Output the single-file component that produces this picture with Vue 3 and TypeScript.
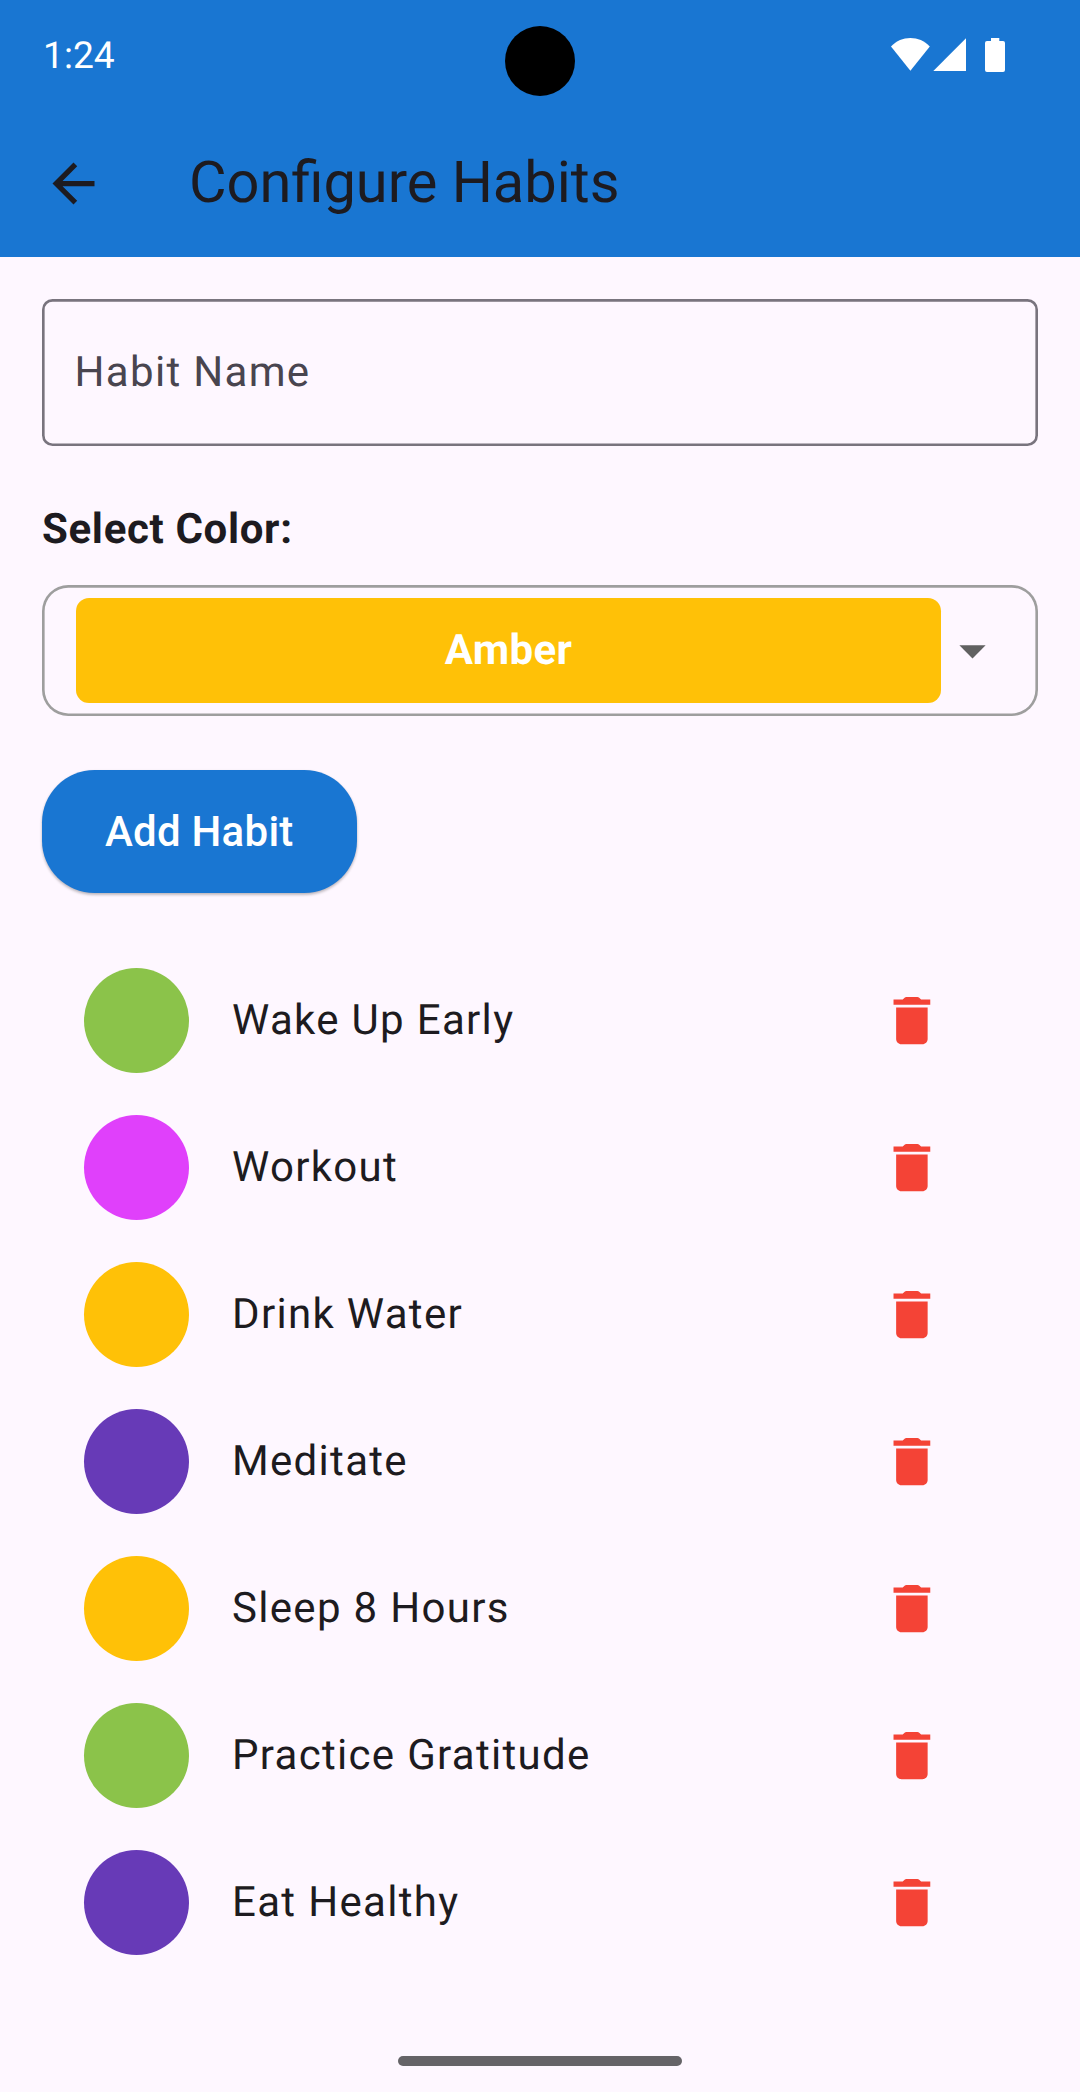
<script setup lang="ts">
interface Habit {
  name: string
  color: string
}

const habits: Habit[] = [
  { name: 'Wake Up Early', color: '#8bc34a' },
  { name: 'Workout', color: '#e040fb' },
  { name: 'Drink Water', color: '#ffc107' },
  { name: 'Meditate', color: '#673ab7' },
  { name: 'Sleep 8 Hours', color: '#ffc107' },
  { name: 'Practice Gratitude', color: '#8bc34a' },
  { name: 'Eat Healthy', color: '#673ab7' },
]
</script>

<template>
  <div class="screen">
    <header class="top">
      <div class="status">
        <span class="time">1:24</span>
        <span class="camera"></span>
        <svg class="status-icons" width="116" height="36" viewBox="0 0 116 36" fill="#fff">
          <path d="M1 9.5C6.500 3.800 13 1 20.400 1S34.300 3.800 39.800 9.500L20.400 33.800Z" />
          <path d="M76 1.200V34H43.300Z" />
          <path d="M101 1h8.300v3h3.700q2 0 2 2v27q0 2-2 2H97q-2 0-2-2V6q0-2 2-2h4Z" />
        </svg>
      </div>
      <div class="appbar">
        <svg class="back" viewBox="0 0 24 24" width="63" height="63" fill="#1d1b20">
          <path d="M20 11H7.830l5.590-5.590L12 4l-8 8 8 8 1.410-1.410L7.830 13H20v-2z" />
        </svg>
        <h1>Configure Habits</h1>
      </div>
    </header>

    <main>
      <div class="field">Habit Name</div>
      <div class="label">Select Color:</div>
      <div class="select">
        <div class="swatch">Amber</div>
        <svg viewBox="0 0 24 24" width="63" height="63" fill="#616161"><path d="M7 10l5 5 5-5z" /></svg>
      </div>
      <button class="add" type="button">Add Habit</button>

      <ul>
        <li v-for="habit in habits" :key="habit.name">
          <span class="dot" :style="{ background: habit.color }"></span>
          <span class="name">{{ habit.name }}</span>
          <svg viewBox="-0.15 0 24 24" width="63" height="63" fill="#f44336">
            <path d="M6 19c0 1.100.9 2 2 2h8c1.100 0 2-.9 2-2V7H6v12zM19 4h-3.500l-.710-.710c-.180-.180-.440-.290-.700-.290H9.910c-.260 0-.520.110-.700.290L8.500 4H5v2h14V4z" />
          </svg>
        </li>
      </ul>
    </main>

    <footer><span></span></footer>
  </div>
</template>

<style>
body {
  margin: 0;
  background: #fef7ff;
}
</style>

<style scoped>
.screen {
  box-sizing: border-box;
  width: 1080px;
  height: 2092px;
  display: flex;
  flex-direction: column;
  overflow: hidden;
  background: #fef7ff;
  color: #1d1b20;
  font-family: Roboto, sans-serif;
  font-size: 42px;
  line-height: 50px;
  text-rendering: geometricPrecision;
}
svg {
  display: block;
  flex: none;
}
.top {
  flex: none;
  height: 257px;
  background: #1976d2;
}
.status {
  position: relative;
  box-sizing: border-box;
  height: 110px;
  padding: 0 74px 0 43px;
  display: flex;
  justify-content: space-between;
  align-items: center;
}
.time {
  padding-top: 2px;
  color: #fff;
  font-size: 37.200px;
}
.camera {
  position: absolute;
  left: 505px;
  top: 26px;
  width: 70px;
  height: 70px;
  border-radius: 50%;
  background: #000;
}
.appbar {
  height: 147px;
  padding-left: 42px;
  display: flex;
  align-items: center;
}
h1 {
  margin: 0 0 0 84px;
  padding-bottom: 1px;
  font-size: 57.75px;
  font-weight: 400;
  line-height: 74px;
}
main {
  flex: 1;
  padding: 42px 42px 0;
}
.field {
  box-sizing: border-box;
  height: 147px;
  padding: 49px 32.600px 0;
  border-radius: 10.5px;
  box-shadow: inset 0 0 0 2.625px #79747e;
  color: #49454f;
  letter-spacing: 1.3125px;
}
.label {
  margin-top: 59px;
  height: 80px;
  font-weight: 700;
  letter-spacing: 0.656px;
}
.select {
  box-sizing: border-box;
  height: 131.250px;
  padding: 0 34px;
  display: flex;
  align-items: center;
  border-radius: 26.250px;
  box-shadow: inset 0 0 0 2.625px #9e9e9e;
}
.swatch {
  box-sizing: border-box;
  flex: 1;
  height: 105px;
  padding-top: 28px;
  border-radius: 13.125px;
  background: #ffc107;
  color: #fff;
  font-weight: 700;
  letter-spacing: 0.394px;
  text-align: center;
}
.add {
  display: block;
  width: 314.500px;
  height: 123.400px;
  margin: 53.750px 0 0;
  padding: 0;
  border: 0;
  border-radius: 52.500px;
  background: #1976d2;
  box-shadow: 0 2px 3px rgba(0, 0, 0, 0.2), 0 1px 3px rgba(0, 0, 0, 0.1);
  color: #fff;
  font: 500 42px/50px Roboto, sans-serif;
  letter-spacing: 0.2625px;
}
ul {
  margin: 53.600px 0 0;
  padding: 0;
  list-style: none;
}
li {
  box-sizing: border-box;
  height: 147px;
  padding: 0 95px 0 42px;
  display: flex;
  align-items: center;
}
.dot {
  flex: none;
  width: 105px;
  height: 105px;
  border-radius: 50%;
}
.name {
  flex: 1;
  margin-left: 43px;
  padding-top: 2px;
  letter-spacing: 1.3125px;
}
footer {
  flex: none;
  height: 36px;
  display: flex;
  justify-content: center;
}
footer span {
  width: 284px;
  height: 10px;
  border-radius: 5px;
  background: #656367;
}
</style>
